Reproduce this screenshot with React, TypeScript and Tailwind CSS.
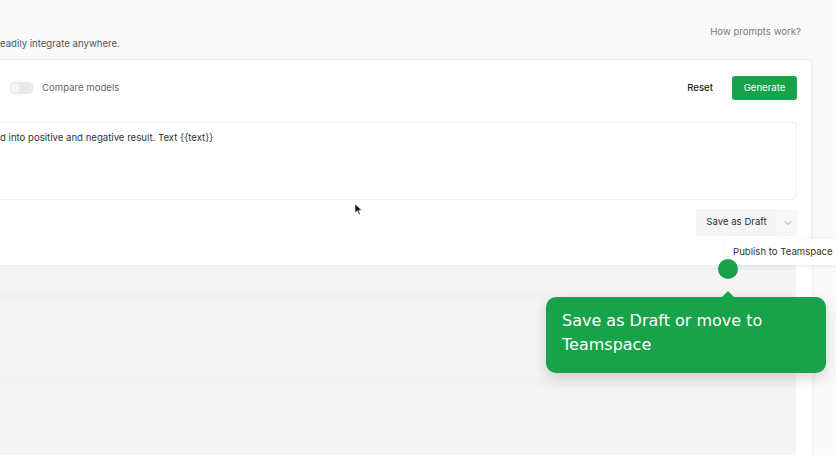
import { ChevronDown } from 'lucide-react';

export default function App() {
  return (
    <div className="relative w-[836px] h-[455px] overflow-hidden bg-[#f7f7f8] font-['Inter',sans-serif] text-[#333]">
      {/* header */}
      <div className="flex h-[59px] justify-between bg-[#f9f9fa] pr-[35px]">
        <p className="mt-auto mb-[8px] text-[9.6px] text-[#555] whitespace-nowrap">eadily integrate anywhere.</p>
        <a className="mt-[25px] text-[9.6px] text-[#7a7a7a] whitespace-nowrap">How prompts work?</a>
      </div>

      <div className="flex h-[396px]">
        <div className="flex w-[812px] flex-col">
          {/* prompt card */}
          <div className="flex h-[206px] flex-col rounded-tr-md border-t border-r border-[#efefef] bg-white pr-[14px]">
            <div className="flex h-[24px] mt-[16px] items-center">
              <div className="ml-[9px] flex h-[12px] w-[25px] items-center rounded-full bg-[#e8e8e8] px-[1px]">
                <span className="h-[10px] w-[10px] rounded-full bg-[#f4f4f4]" />
              </div>
              <span className="ml-[8px] text-[9.6px] text-[#666]">Compare models</span>
              <button className="ml-auto text-[9.6px] font-medium text-[#222]">Reset</button>
              <button className="ml-[19px] h-[24px] w-[65px] rounded-[3px] bg-[#18a34a] text-[9.6px] text-white">Generate</button>
            </div>
            <div className="mt-[22px] h-[78px] rounded-br-md border-y border-r border-[#efefef] pt-[8px]">
              <p className="text-[9.6px] leading-[14px] whitespace-nowrap">d into positive and negative result. Text {'{{text}}'}</p>
            </div>
            <div className="mt-[9px] flex justify-end gap-[1px]">
              <button className="h-[27px] w-[81px] rounded-l-[3px] bg-[#f4f4f4] text-[9.6px] text-[#333]">Save as Draft</button>
              <button className="flex h-[27px] w-[19px] items-center justify-center rounded-r-[3px] bg-[#f7f7f7] text-[#777]">
                <ChevronDown size={12} strokeWidth={1.4} />
              </button>
            </div>
          </div>
          {/* dimmed lower area */}
          <div className="flex flex-1">
            <div className="flex-1 bg-[#f4f4f4] border-t-[5px] border-[#f1f1f1]">
              <div className="mt-[23px] h-[7px] bg-[#f2f2f2]" />
              <div className="mt-[78px] h-[8px] bg-[#f2f2f2]" />
            </div>
            <div className="w-[16px] bg-white" />
          </div>
        </div>
        <div className="flex-1 border-l border-[#f0f0f0] bg-[#f9f9f9]" />
      </div>

      {/* dropdown menu */}
      <div className="absolute left-[725px] top-[239px] flex h-[26px] w-[130px] items-center bg-white pl-[8px] shadow-[0_1px_4px_rgba(0,0,0,0.08)]">
        <span className="text-[9.6px] text-[#333] whitespace-nowrap">Publish to Teamspace</span>
      </div>

      {/* tour dot */}
      <div className="absolute left-[718px] top-[259px] h-[20px] w-[20px] rounded-full bg-[#18a34a]" />

      {/* tooltip */}
      <div className="absolute left-[546px] top-[297px] h-[76px] w-[280px] rounded-[10px] bg-[#18a34a] pl-[16px] pr-[16px] pt-[12px] shadow-[0_6px_14px_rgba(0,0,0,0.15)]">
        <div className="absolute -top-[6px] left-[176px] h-0 w-0 border-x-[6px] border-b-[6px] border-x-transparent border-b-[#18a34a]" />
        <p className="font-['DejaVu_Sans',sans-serif] text-[16px] leading-[24px] text-white">Save as Draft or move to Teamspace</p>
      </div>

      {/* mouse cursor */}
      <svg className="absolute left-[354px] top-[203px]" width="9" height="13" viewBox="0 0 9 13">
        <path d="M1 1 L1 10 L3.3 7.8 L5 11.5 L6.3 10.9 L4.7 7.3 L7.8 7.3 Z" fill="#111" stroke="#fff" strokeWidth="0.6" />
      </svg>
    </div>
  );
}
